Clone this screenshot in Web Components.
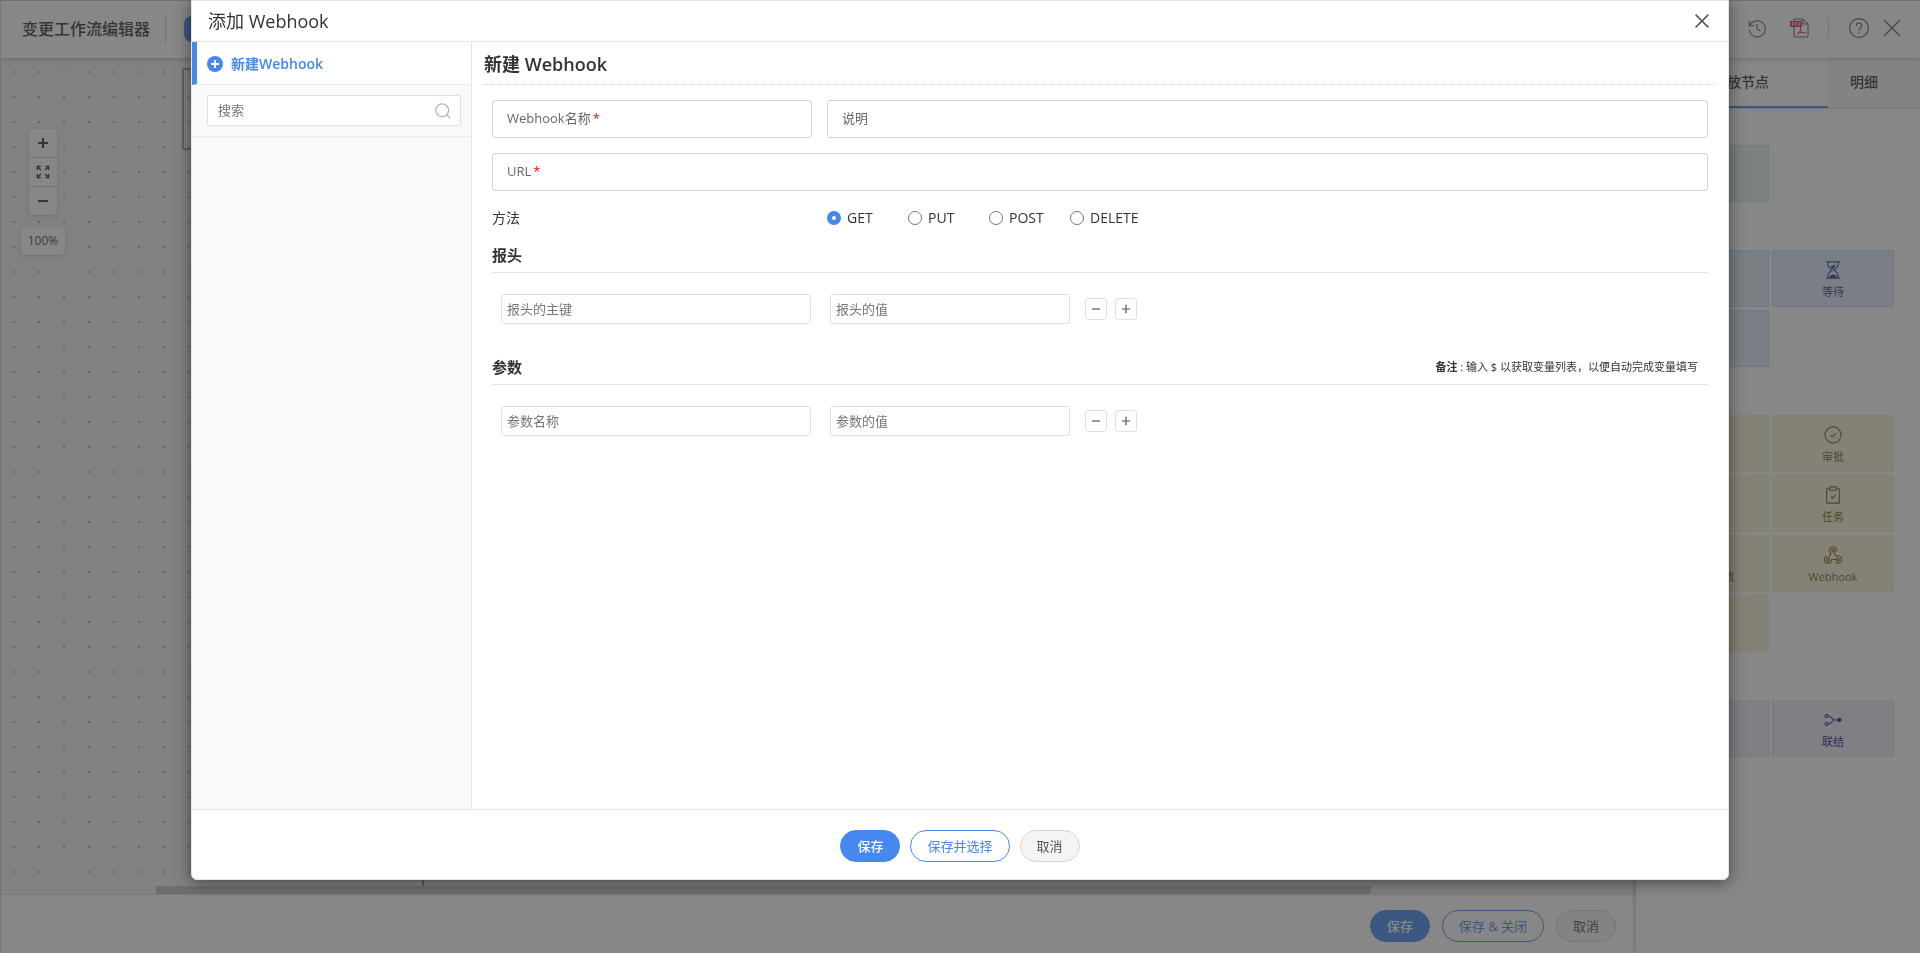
<!DOCTYPE html>
<html lang="zh-CN">
<head>
<meta charset="utf-8">
<title>变更工作流编辑器</title>
<style>
	html, body {
		height: 100%;
		margin: 0;
	}
	body {
		font: 14px/20px "Open Sans", "Noto Sans CJK SC", sans-serif;
		color: #333;
		overflow: hidden;
	}
</style>
</head>
<body>

<workflow-editor></workflow-editor>

<webhook-dialog heading="添加 Webhook">
	<webhook-list slot="side"></webhook-list>
	<webhook-form></webhook-form>
	<pill-button slot="actions" kind="primary">保存</pill-button>
	<pill-button slot="actions" kind="outline">保存并选择</pill-button>
	<pill-button slot="actions">取消</pill-button>
</webhook-dialog>

<script>
	(function() {
		function define(name, markup, setup) {
			const template = document.createElement('template');
			template.innerHTML = markup;

			customElements.define(name, class extends HTMLElement {
				constructor() {
					super();
					this.attachShadow({mode: 'open'}).appendChild(template.content.cloneNode(true));
				}

				connectedCallback() {
					if(setup) setup(this, this.shadowRoot);
				}
			});
		}

		const icons = {
			history: '<path d="M2 7.300A9 9 0 1 1 1.300 12M1.300 2v5.500h5.500M10 5.500V11l4 2.500"/>',
			help: '<circle cx="10" cy="10" r="9.400"/><path d="M7.300 7.700a2.700 2.700 0 1 1 4.200 2.200c-1 .7-1.500 1.100-1.500 2.300M10 14v1.400"/>',
			close: '<path d="M2 2l16 16M18 2L2 18"/>',
			search: '<circle cx="9" cy="9" r="8"/><path d="M15 15l4 4"/>',
			plus: '<path d="M10 3v14M3 10h14"/>',
			minus: '<path d="M3 10h14"/>',
			expand: '<path d="M2 7V2h5M2 2l5 5M13 2h5v5M18 2l-5 5M2 13v5h5M2 18l5-5M13 18h5v-5M18 18l-5-5"/>',
			hourglass: '<path d="M2.500 1h15M2.500 19h15M4 1c0 5 2 6.500 5 9-3 2.500-5 4-5 9M16 1c0 5-2 6.500-5 9 3 2.500 5 4 5 9"/><path d="M8 6.500l4-1.500-2 3.500zM6 18c1-2 2.500-2.500 4-2.500s3 .5 4 2.500z" fill="currentColor"/>',
			approve: '<circle cx="10" cy="10" r="9"/><path d="M6.800 10.300l2.200 2 4-4.200"/>',
			task: '<path d="M6 3H3v16h14V3h-3M6.500 1h7v3.800h-7zM7.500 11.500l2 2 3.500-3.700"/>',
			hook: '<circle cx="10" cy="5" r="1.500"/><circle cx="4.500" cy="15" r="1.500"/><circle cx="15.500" cy="15" r="1.500"/><path d="M13.600 6.600A4 4 0 1 0 7.600 8.200L5.300 13M3.500 11.100A4 4 0 1 0 8.400 15H14M12.700 17.800A4 4 0 1 0 13.500 11.500L10.800 6.500"/>',
			join: '<circle cx="2.800" cy="5.500" r="1.700"/><circle cx="2.800" cy="14.500" r="1.700"/><path d="M4.500 5.500c4 0 4 4.500 8 4.500-4 0-4 4.500-8 4.500M12 10h4"/><circle cx="17" cy="10" r="1.800" fill="currentColor"/>'
		};

		define('line-icon', `
			<style>
				:host { display: inline-flex; width: 20px; height: 20px; }
				svg { width: 100%; height: 100%; fill: none; stroke: currentColor; stroke-width: var(--stroke, 1.2); overflow: visible; }
			</style>
			<svg viewBox="0 0 20 20" aria-hidden="true"></svg>
		`, function(elem, root) {
			root.querySelector('svg').innerHTML = icons[elem.getAttribute('name')];
		});

		define('pill-button', `
			<style>
				:host { display: inline-flex; }
				button {
					height: 32px;
					padding: 0 16px;
					border: 1px solid #d4d4d4;
					border-radius: 16px;
					background: #f4f4f4;
					color: #555;
					font: 13px/20px "Open Sans", "Noto Sans CJK SC", sans-serif;
				}
				:host([kind=primary]) button { background: #4588f0; border-color: #4588f0; color: #fff; font-weight: 500; }
				:host([kind=outline]) button { background: #fff; border-color: #4588f0; color: #4588f0; }
			</style>
			<button type="button"><slot></slot></button>
		`);

		/* Editor behind the dialog */

		define('editor-header', `
			<style>
				:host {
					display: flex;
					align-items: center;
					height: 58px;
					padding: 0 18px 2px 22px;
					box-sizing: border-box;
					background: #fff;
					border-top: 1px solid #e5e5e5;
					box-shadow: 0 1px 6px rgba(0, 0, 0, .25);
					position: relative;
					color: #555b62;
				}
				h1 { margin: 0; font-size: 16px; line-height: 24px; font-weight: 500; color: #333; }
				.rule { width: 1px; height: 20px; background: #ccc; }
				.rule.tall { height: 30px; margin: 0 18px 0 15px; }
				.badge { width: 40px; height: 26px; border-radius: 8px; background: #4588f0; }
				nav { margin-left: auto; padding-bottom: 2px; display: flex; align-items: center; }
				button { display: flex; padding: 0; border: 0; background: none; color: inherit; }
				.history line-icon { width: 18px; height: 18px; }
				.pdf { margin: 0 19px 0 24px; }
				.help { margin: 0 13px 0 20px; }
			</style>
			<h1>变更工作流编辑器</h1>
			<span class="rule tall"></span>
			<span class="badge"></span>
			<nav>
				<button type="button" class="history" aria-label="history"><line-icon name="history"></line-icon></button>
				<button type="button" class="pdf" aria-label="pdf">
					<svg width="19" height="20" viewBox="0 0 19 20" fill="none">
						<path d="M4 1h9l5 5v13H4zM13 1v5h5" stroke="#555b62"/>
						<path d="M0 3h12v6H0z" fill="#e0263c"/>
						<path d="M2 8V4.500h1.500v2H2M5.500 4.500v3h1l.7-.7V5l-.7-.5zM9 8V4.500h2M9 6.200h1.500" stroke="#fff" stroke-width=".7"/>
						<path d="M10.500 9v3.500L7 16.500M10.500 12.500l2 2 3.500.5M8.500 15l4-.7" stroke="#e0263c"/>
					</svg>
				</button>
				<span class="rule"></span>
				<button type="button" class="help" aria-label="help"><line-icon name="help"></line-icon></button>
				<button type="button" aria-label="close"><line-icon name="close"></line-icon></button>
			</nav>
		`);

		define('zoom-control', `
			<style>
				:host { display: flex; flex-direction: column; align-items: center; gap: 12px; width: 44px; }
				div, output { background: #fff; border-radius: 4px; box-shadow: 0 1px 5px rgba(0, 0, 0, .2); }
				div { width: 28px; }
				button { display: flex; align-items: center; justify-content: center; width: 28px; height: 28px; padding: 0; border: 0; background: none; color: #333; }
				button + button { height: 29px; border-top: 1px solid #ccc; }
				line-icon { width: 14px; height: 14px; --stroke: 2; }
				.in, .out { --stroke: 3; }
				output { width: 44px; font-size: 12px; line-height: 28px; text-align: center; color: #444; }
			</style>
			<div>
				<button type="button" aria-label="zoom in"><line-icon class="in" name="plus"></line-icon></button>
				<button type="button" aria-label="fit"><line-icon name="expand"></line-icon></button>
				<button type="button" aria-label="zoom out"><line-icon class="out" name="minus"></line-icon></button>
			</div>
			<output>100%</output>
		`);

		define('editor-canvas', `
			<style>
				:host {
					display: block;
					position: relative;
					overflow: hidden;
					background: conic-gradient(from 270deg at 2px 2px, #b0b0b0 90deg, transparent 0) 13px 13px / 25px 25px, #f3f3f3;
				}
				zoom-control { position: absolute; left: 21px; top: 71px; }
				.node { position: absolute; left: 182px; top: 10px; width: 480px; height: 78px; border: 2px solid #999; border-radius: 2px; }
				.edge { position: absolute; left: 422px; top: 88px; bottom: 8px; width: 2px; background: #999; }
				.scroll { position: absolute; left: 0; right: 0; bottom: 0; height: 8px; background: #f1f1f1; }
				.thumb { height: 100%; margin: 0 265px 0 156px; background: #c1c1c1; }
			</style>
			<div class="node"></div>
			<div class="edge"></div>
			<zoom-control></zoom-control>
			<div class="scroll"><div class="thumb"></div></div>
		`);

		define('node-card', `
			<style>
				:host {
					display: flex;
					flex-direction: column;
					align-items: center;
					gap: 4px;
					height: 57px;
					padding-top: 10px;
					box-sizing: border-box;
					font-size: 11px;
					line-height: 18px;
					border: 1px solid var(--edge);
					background: var(--fill);
					color: var(--ink);
				}
			</style>
			<slot name="icon"></slot>
			<span><slot></slot></span>
		`);

		define('node-group', `
			<style>
				:host { display: grid; grid-template-columns: 1fr 1fr; gap: 3px; }
				:host([tone=green]) { --fill: #e2f0ec; --edge: #d2e6de; --ink: #2b7a5c; }
				:host([tone=blue]) { --fill: #dfebfb; --edge: #cbdcf2; --ink: #2c3f8f; }
				:host([tone=yellow]) { --fill: #f8f2d4; --edge: #f3edc8; --ink: #7b5b0c; }
				:host([tone=purple]) { --fill: #efebf8; --edge: #e4dcf5; --ink: #44149a; }
				::slotted(node-card) { min-width: 0; }
			</style>
			<slot></slot>
		`);

		define('node-panel', `
			<style>
				:host { display: block; background: #fff; box-shadow: 0 0 6px rgba(0, 0, 0, .35); }
				.tabs { display: flex; height: 50px; border-bottom: 1px solid #ddd; }
				.tabs button {
					flex: 0 0 72px;
					padding: 0;
					border: 0;
					border-bottom: 2px solid transparent;
					background: #f6f6f6;
					font: 500 14px/20px "Open Sans", "Noto Sans CJK SC", sans-serif;
					color: #333;
				}
				.tabs button[aria-selected=true] { flex: 0 0 192px; text-align: right; padding-right: 59px; background: #fff; border-color: #4588f0; }
				.tabs::after { content: ""; flex: 1; background: #f6f6f6; }
				.groups { display: flex; flex-direction: column; gap: 48px; padding: 36px 26px 0 11px; }
				line-icon { width: 18px; height: 18px; }
				.clip { display: block; padding: 22px 0 0 42px; }
			</style>
			<div class="tabs" role="tablist">
				<button type="button" role="tab" aria-selected="true">放节点</button>
				<button type="button" role="tab">明细</button>
			</div>
			<div class="groups">
				<node-group tone="green"><node-card></node-card></node-group>
				<node-group tone="blue">
					<node-card></node-card>
					<node-card><line-icon slot="icon" name="hourglass"></line-icon>等待</node-card>
					<node-card></node-card>
				</node-group>
				<node-group tone="yellow">
					<node-card></node-card>
					<node-card><line-icon slot="icon" name="approve"></line-icon>审批</node-card>
					<node-card></node-card>
					<node-card><line-icon slot="icon" name="task"></line-icon>任务</node-card>
					<node-card><span class="clip">数</span></node-card>
					<node-card><line-icon slot="icon" name="hook"></line-icon>Webhook</node-card>
					<node-card></node-card>
				</node-group>
				<node-group tone="purple">
					<node-card></node-card>
					<node-card><line-icon slot="icon" name="join"></line-icon>联结</node-card>
				</node-group>
			</div>
		`);

		define('workflow-editor', `
			<style>
				:host { display: grid; grid-template: 58px 1fr 59px / 1fr 284px; height: 100vh; position: relative; }
				editor-header { grid-column: 1 / 3; z-index: 2; }
				node-panel { grid-area: 2 / 2 / 4 / 3; z-index: 1; }
				footer {
					display: flex;
					align-items: center;
					justify-content: flex-end;
					gap: 12px;
					padding: 3px 20px 0 0;
					background: #fff;
					border-top: 1px solid #ddd;
					box-shadow: 0 0 6px rgba(0, 0, 0, .2);
				}
				.veil { position: absolute; inset: 0; z-index: 3; background: rgba(55, 55, 55, .6); box-shadow: inset 1px 1px 0 rgba(0, 0, 0, .1); }
			</style>
			<editor-header></editor-header>
			<editor-canvas></editor-canvas>
			<node-panel></node-panel>
			<footer>
				<pill-button kind="primary">保存</pill-button>
				<pill-button kind="outline">保存 &amp; 关闭</pill-button>
				<pill-button>取消</pill-button>
			</footer>
			<div class="veil"></div>
		`);

		/* Dialog */

		define('webhook-dialog', `
			<style>
				:host {
					display: flex;
					flex-direction: column;
					position: fixed;
					z-index: 10;
					top: 0;
					left: 50%;
					transform: translateX(-50%);
					width: calc(80% + 2px);
					height: calc(100% - 73px);
					box-sizing: border-box;
					border: 1px solid #e5e5e5;
					border-radius: 0 0 6px 6px;
					background: #fff;
					box-shadow: 0 2px 16px rgba(0, 0, 0, .5);
					overflow: hidden;
				}
				header { display: flex; align-items: center; justify-content: space-between; height: 40px; padding: 0 18px 0 16px; border-bottom: 1px solid #e5e5e5; }
				h2 { margin: 0; font-size: 18px; line-height: 24px; font-weight: 400; }
				header button { display: flex; padding: 0; border: 0; background: none; color: #555b62; }
				header line-icon { width: 16px; height: 16px; --stroke: 2; }
				main { flex: 1; display: grid; grid-template-columns: 280px 1fr; min-height: 0; }
				footer {
					display: flex;
					align-items: center;
					justify-content: center;
					gap: 10px;
					height: 70px;
					padding-top: 3px;
					box-sizing: border-box;
					border-top: 1px solid #e5e5e5;
				}
			</style>
			<header>
				<h2></h2>
				<button type="button" aria-label="close"><line-icon name="close"></line-icon></button>
			</header>
			<main>
				<slot name="side"></slot>
				<slot></slot>
			</main>
			<footer><slot name="actions"></slot></footer>
		`, function(elem, root) {
			root.querySelector('h2').textContent = elem.getAttribute('heading');
		});

		define('webhook-list', `
			<style>
				:host { display: block; background: #f8f9fb; border-right: 1px solid #e5e5e5; }
				a {
					display: flex;
					align-items: center;
					gap: 8px;
					height: 40px;
					padding: 2px 0 0 10px;
					border-left: 5px solid #4588f0;
					border-bottom: 1px solid #ebedf2;
					background: #fff;
					color: #4588f0;
					font-weight: 600;
					text-decoration: none;
				}
				.search { display: flex; padding: 10px 10px 10px 15px; border-bottom: 1px solid #ebedf2; }
				label { flex: 1; display: flex; align-items: center; height: 29px; padding: 0 9px 0 10px; border: 1px solid #e0e0e0; border-radius: 2px; background: #fff; }
				input { flex: 1; min-width: 0; height: 29px; padding: 0 0 2px; box-sizing: border-box; border: 0; outline: 0; font: 13px/20px "Open Sans", "Noto Sans CJK SC", sans-serif; }
				input::placeholder { color: #757575; }
				line-icon { width: 16px; height: 16px; color: #b3b7bb; --stroke: 1.6; }
			</style>
			<a href="#new">
				<svg width="16" height="16" viewBox="0 0 16 16"><circle cx="8" cy="8" r="8" fill="#4588f0"/><path d="M8 4v8M4 8h8" stroke="#fff" stroke-width="2"/></svg>
				<span>新建Webhook</span>
			</a>
			<div class="search">
				<label><input type="text" placeholder="搜索" aria-label="搜索"><line-icon name="search"></line-icon></label>
			</div>
		`);

		define('text-field', `
			<style>
				:host { display: block; position: relative; }
				input { display: block; width: 100%; height: 38px; padding: 0 14px; box-sizing: border-box; border: 1px solid #d4d4d4; border-radius: 3px; background: #fff; font: inherit; }
				label { position: absolute; left: 15px; top: 8px; font-size: 13px; line-height: 20px; color: #666; pointer-events: none; }
				:host([required]) label::after { content: "*"; margin-left: 2px; color: #f00; }
			</style>
			<label for="field"><slot></slot></label>
			<input id="field" type="text">
		`);

		define('method-picker', `
			<style>
				:host { display: flex; align-items: center; }
				.name { flex: 0 0 335px; }
				label { display: flex; align-items: center; gap: 6px; width: 81px; }
				input {
					appearance: none;
					width: 14px;
					height: 14px;
					margin: 0;
					border: 1px solid #777;
					border-radius: 50%;
					background: #fff;
				}
				input:checked { border: 5px solid #4588f0; }
			</style>
			<span class="name">方法</span>
			<label><input type="radio" name="method" checked>GET</label>
			<label><input type="radio" name="method">PUT</label>
			<label><input type="radio" name="method">POST</label>
			<label><input type="radio" name="method">DELETE</label>
		`);

		define('pair-section', `
			<style>
				:host { display: block; }
				header { display: flex; align-items: center; justify-content: space-between; height: 34px; padding-right: 10px; border-bottom: 1px solid #e5e5e5; font-size: 11px; }
				h4 { margin: 0; font-size: 15px; line-height: 20px; font-weight: 600; }
				.row { display: flex; align-items: center; margin: 21px 0 0 9px; }
				input {
					height: 30px;
					padding: 0 5px;
					box-sizing: border-box;
					border: 1px solid #e0e0e0;
					border-radius: 3px;
					background: #fff;
					font: 13px/20px "Open Sans", "Noto Sans CJK SC", sans-serif;
				}
				input::placeholder { color: #757575; }
				.key { width: 310px; margin-right: 19px; }
				.value { width: 240px; margin-right: 15px; }
				button { display: flex; align-items: center; justify-content: center; width: 22px; height: 22px; margin-right: 8px; padding: 0; border: 1px solid #e0e0e0; border-radius: 3px; background: #fff; color: #555; }
				line-icon { width: 12px; height: 12px; --stroke: 2; }
			</style>
			<header>
				<h4></h4>
				<slot name="note"></slot>
			</header>
			<div class="row">
				<input class="key" type="text">
				<input class="value" type="text">
				<button type="button" aria-label="remove"><line-icon name="minus"></line-icon></button>
				<button type="button" aria-label="add"><line-icon name="plus"></line-icon></button>
			</div>
		`, function(elem, root) {
			root.querySelector('h4').textContent = elem.getAttribute('heading');
			['key', 'value'].forEach(function(part) {
				const input = root.querySelector('.' + part);
				input.placeholder = elem.getAttribute(part);
				input.setAttribute('aria-label', elem.getAttribute(part));
			});
		});

		define('webhook-form', `
			<style>
				:host { display: block; min-width: 0; padding: 0 12px; }
				h3 { margin: 0; padding: 10px 0 8px; font-size: 18px; line-height: 24px; font-weight: 600; border-bottom: 1px dotted #d4d4d4; }
				form { padding: 15px 8px 0; }
				.fields { display: grid; grid-template-columns: 320px 1fr; gap: 15px; margin-bottom: 17px; }
				.wide { grid-column: 1 / 3; }
				pair-section { margin-top: 10px; }
				pair-section + pair-section { margin-top: 26px; }
			</style>
			<h3>新建 Webhook</h3>
			<form>
				<div class="fields">
					<text-field required>Webhook名称</text-field>
					<text-field>说明</text-field>
					<text-field class="wide" required>URL</text-field>
				</div>
				<method-picker></method-picker>
				<pair-section heading="报头" key="报头的主键" value="报头的值"></pair-section>
				<pair-section heading="参数" key="参数名称" value="参数的值">
					<span slot="note"><b>备注</b> : 输入 $ 以获取变量列表，以便自动完成变量填写</span>
				</pair-section>
			</form>
		`);
	})();
</script>
</body>
</html>
